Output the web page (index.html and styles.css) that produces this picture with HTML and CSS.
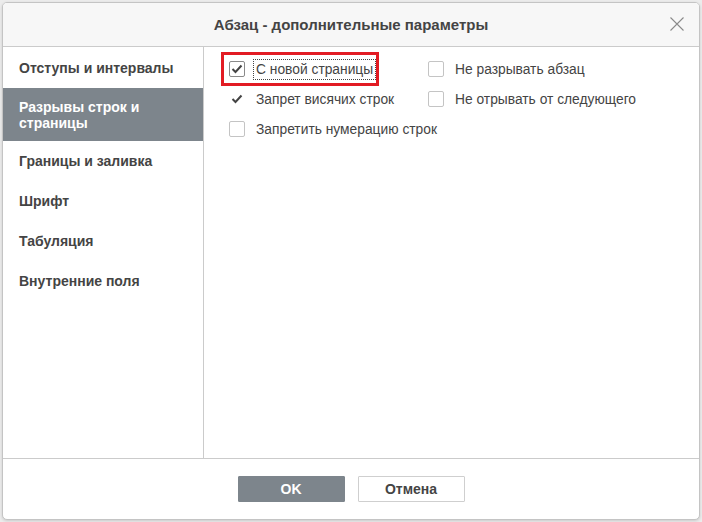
FILE: index.html
```html
<!DOCTYPE html>
<html lang="ru">
<head>
<meta charset="utf-8">
<title>Абзац - дополнительные параметры</title>
<link rel="stylesheet" href="styles.css">
</head>
<body>
<div class="dialog">
  <div class="header">
    <div class="title">Абзац - дополнительные параметры</div>
    <div class="close">
      <svg width="14" height="14" viewBox="0 0 14 14"><path d="M0.5 0.5 L13.5 13.5 M13.5 0.5 L0.5 13.5" stroke="#8a8a8a" stroke-width="1.1" fill="none"/></svg>
    </div>
  </div>
  <div class="body">
    <div class="sidebar">
      <div class="nav-item">Отступы и интервалы</div>
      <div class="nav-item active">Разрывы строк и страницы</div>
      <div class="nav-item">Границы и заливка</div>
      <div class="nav-item">Шрифт</div>
      <div class="nav-item">Табуляция</div>
      <div class="nav-item">Внутренние поля</div>
    </div>
    <div class="content">
      <div class="grid">
        <div class="check highlighted">
          <span class="box checked"><svg width="12" height="10" viewBox="0 0 12 10"><path d="M1.5 5 L4.5 8 L10.5 1.5" stroke="#444" stroke-width="2" fill="none"/></svg></span>
          <span class="label focus">С новой страницы</span>
        </div>
        <div class="check">
          <span class="box"></span>
          <span class="label">Не разрывать абзац</span>
        </div>
        <div class="check">
          <span class="box checked nob"><svg width="12" height="10" viewBox="0 0 12 10"><path d="M1.5 5 L4.5 8 L10.5 1.5" stroke="#444" stroke-width="2" fill="none"/></svg></span>
          <span class="label">Запрет висячих строк</span>
        </div>
        <div class="check">
          <span class="box"></span>
          <span class="label">Не отрывать от следующего</span>
        </div>
        <div class="check">
          <span class="box"></span>
          <span class="label">Запретить нумерацию строк</span>
        </div>
      </div>
    </div>
  </div>
  <div class="footer">
    <button class="btn primary">OK</button>
    <button class="btn">Отмена</button>
  </div>
</div>
</body>
</html>
```
FILE: styles.css
```css
html, body {
  margin: 0;
  padding: 0;
  background: #ececec;
}
body {
  padding: 2px;
  font-family: "Liberation Sans", Arial, sans-serif;
  font-size: 13px;
  color: #444;
}
.dialog {
  box-sizing: border-box;
  width: 698px;
  height: 518px;
  background: #fff;
  border: 1px solid #c4c4c4;
  border-radius: 5px;
  box-shadow: 0 1px 3px rgba(0,0,0,0.15);
  display: flex;
  flex-direction: column;
  overflow: hidden;
}
.header {
  height: 43px;
  background: #f7f7f7;
  border-bottom: 1px solid #cbcbcb;
  display: flex;
  align-items: center;
  justify-content: center;
  position: relative;
  flex: none;
}
.title {
  font-size: 15px;
  font-weight: bold;
  color: #444;
}
.close {
  position: absolute;
  right: 15px;
  top: 14px;
  width: 14px;
  height: 14px;
  display: flex;
}
.body {
  flex: 1;
  display: flex;
  border-bottom: 1px solid #cbcbcb;
}
.sidebar {
  width: 200px;
  border-right: 1px solid #cbcbcb;
  flex: none;
  padding-top: 1px;
}
.nav-item {
  padding: 12px 17px 12px 16px;
  line-height: 16px;
  font-size: 14px;
  font-weight: bold;
  color: #444;
}
.nav-item.active {
  background: #7d858c;
  color: #fff;
  padding-top: 11px;
  padding-bottom: 10px;
}
.content {
  flex: 1;
  padding: 14px 0 0 25px;
}
.grid {
  display: grid;
  grid-template-columns: 199px auto;
  row-gap: 14px;
}
.check {
  display: flex;
  align-items: center;
  height: 16px;
  position: relative;
}
.box {
  box-sizing: border-box;
  width: 16px;
  height: 16px;
  border: 1px solid #c4c4c4;
  border-radius: 2px;
  display: flex;
  align-items: center;
  justify-content: center;
  flex: none;
}
.box.checked {
  border-color: #8a8a8a;
}
.box.nob {
  border-color: transparent;
}
.label {
  margin-left: 11px;
  color: #444;
  font-size: 13.8px;
  white-space: nowrap;
}
.label.focus {
  outline: 1px dotted #444;
  outline-offset: 2px;
}
.highlighted::before {
  content: "";
  position: absolute;
  left: -8px;
  top: -9px;
  width: 158px;
  height: 34px;
  box-sizing: border-box;
  border: 3px solid #e21b23;
}
.footer {
  height: 60px;
  flex: none;
  display: flex;
  align-items: center;
  justify-content: center;
  gap: 13px;
}
.btn {
  box-sizing: border-box;
  width: 107px;
  height: 26px;
  font-family: "Liberation Sans", Arial, sans-serif;
  font-size: 14px;
  font-weight: bold;
  color: #444;
  background: #fff;
  border: 1px solid #cfcfcf;
  border-radius: 1px;
  padding: 0;
}
.btn.primary {
  background: #7d858c;
  border-color: #7d858c;
  color: #fff;
}
```
